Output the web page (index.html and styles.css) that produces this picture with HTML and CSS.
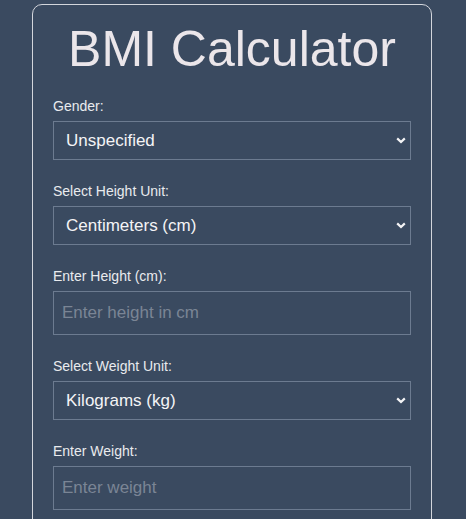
FILE: index.html
```html
<!DOCTYPE html>
<html lang="en">
<head>
<meta charset="utf-8">
<title>BMI Calculator</title>
<link rel="stylesheet" href="styles.css">
</head>
<body>
<div class="card">
  <h1 class="title">BMI Calculator</h1>
  <div class="field">
    <label class="label" for="gender">Gender:</label>
    <select id="gender" class="control select">
      <option>Unspecified</option>
      <option>Male</option>
      <option>Female</option>
    </select>
  </div>
  <div class="field">
    <label class="label" for="hunit">Select Height Unit:</label>
    <select id="hunit" class="control select">
      <option>Centimeters (cm)</option>
      <option>Feet/Inches</option>
    </select>
  </div>
  <div class="field">
    <label class="label" for="height">Enter Height (cm):</label>
    <input id="height" class="control input" type="number" placeholder="Enter height in cm">
  </div>
  <div class="field">
    <label class="label" for="wunit">Select Weight Unit:</label>
    <select id="wunit" class="control select">
      <option>Kilograms (kg)</option>
      <option>Pounds (lb)</option>
    </select>
  </div>
  <div class="field">
    <label class="label" for="weight">Enter Weight:</label>
    <input id="weight" class="control input" type="number" placeholder="Enter weight">
  </div>
</div>
</body>
</html>
```
FILE: styles.css
```css
html, body {
  margin: 0;
  background: #3a4a60;
}
body {
  padding: 4px 0 40px 32px;
  font-family: "Liberation Sans", Arial, sans-serif;
}
.card {
  width: 400px;
  box-sizing: border-box;
  border: 1px solid #d3d6dc;
  border-radius: 10px;
  padding: 16px 20px 20px;
  background: #3a4a60;
}
.title {
  margin: 0 0 20px;
  font-size: 50px;
  line-height: 57px;
  font-weight: normal;
  text-align: center;
  color: #ebe6ea;
}
.field {
  display: flex;
  flex-direction: column;
  margin-bottom: 23px;
}
.label {
  font-size: 14px;
  line-height: 16px;
  color: #e9ebee;
  margin-bottom: 7px;
}
.control {
  box-sizing: border-box;
  width: 100%;
  margin: 0;
  border: 1px solid #6c7b90;
  border-radius: 0;
  background-color: #3a4a60;
  color: #f4f4f6;
  font-family: "Liberation Sans", Arial, sans-serif;
  font-size: 17px;
  outline: none;
}
.select {
  height: 39px;
  padding: 0 8px 0 12px;
  appearance: none;
  -webkit-appearance: none;
  background-image: url("data:image/svg+xml;utf8,<svg xmlns='http://www.w3.org/2000/svg' width='10' height='7' viewBox='0 0 10 7'><path d='M1.2 1.4 L5 5 L8.8 1.4' fill='none' stroke='%23f4f4f6' stroke-width='2.2'/></svg>");
  background-repeat: no-repeat;
  background-position: right 4px center;
  background-size: 10px 7px;
}
.input {
  height: 44px;
  padding: 0 8px;
}
.input::placeholder {
  color: #7a8595;
}
.input::-webkit-outer-spin-button,
.input::-webkit-inner-spin-button {
  -webkit-appearance: none;
  margin: 0;
}
```
